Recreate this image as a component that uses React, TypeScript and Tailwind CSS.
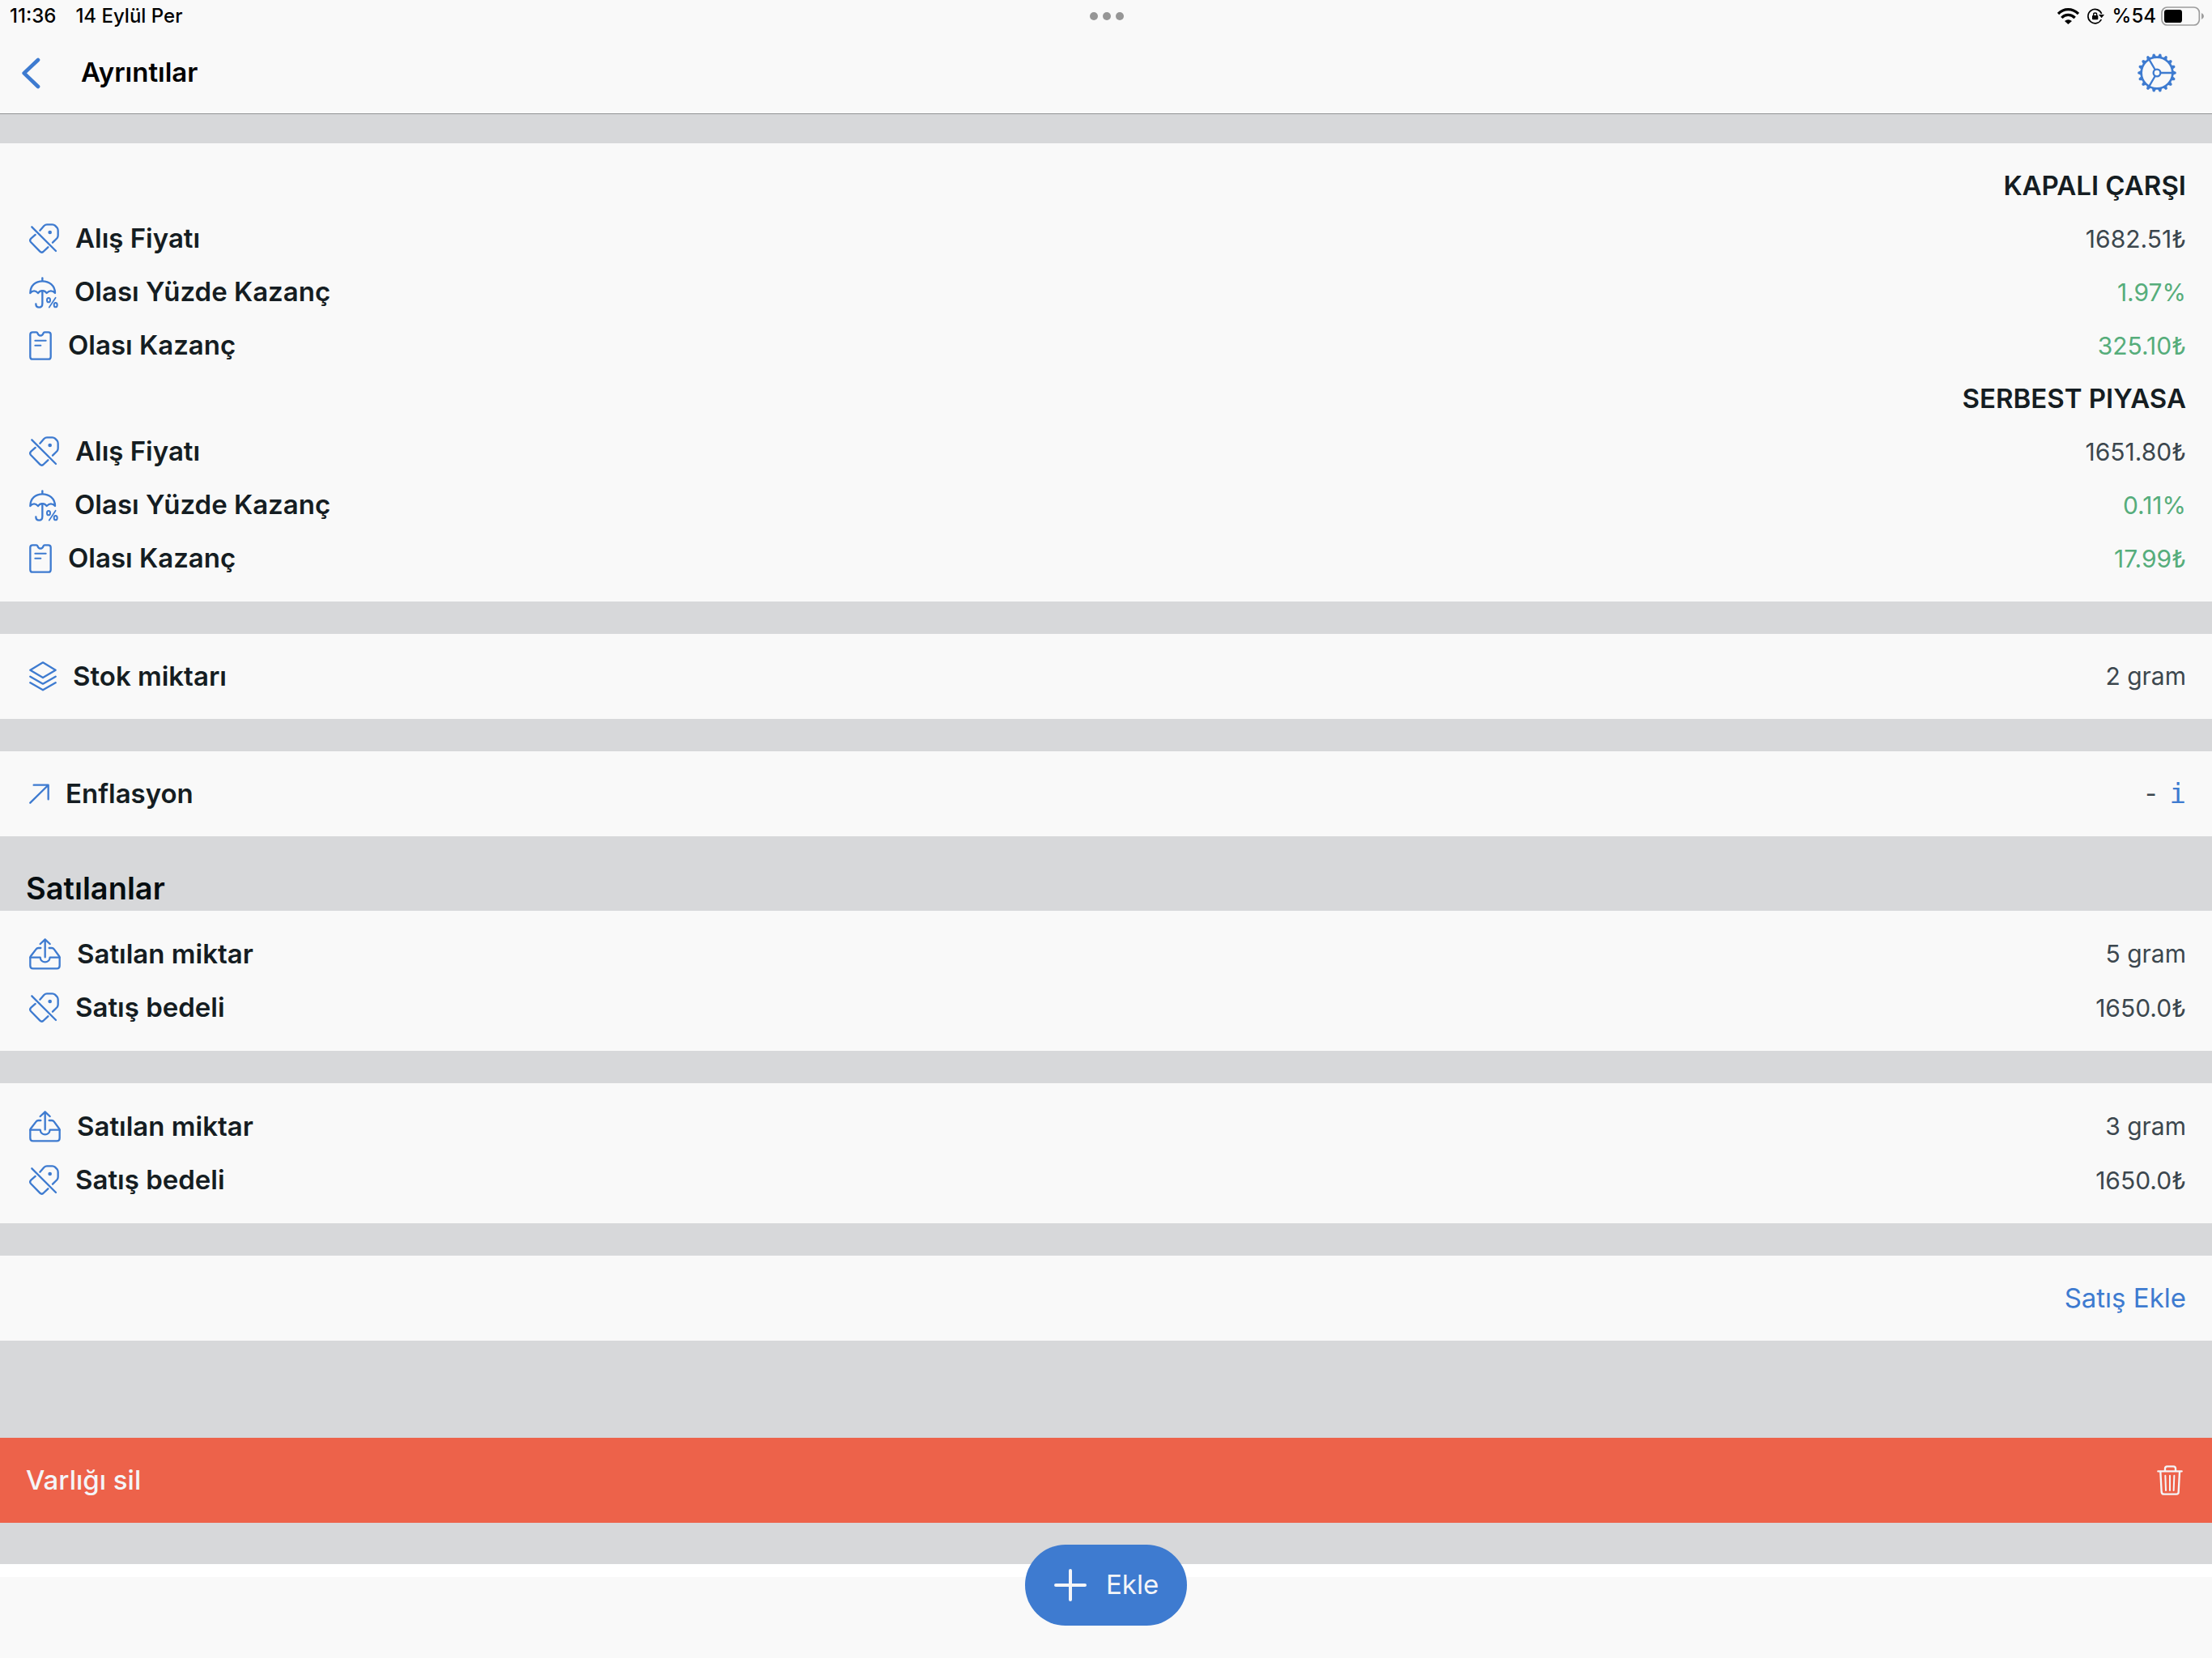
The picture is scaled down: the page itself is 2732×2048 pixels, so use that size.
import React from "react";

type Tone = "normal" | "gain";

type IconProps = {
    width: string;
    viewBox: string;
    children: React.ReactNode;
};

// Outline icon, drawn on a grid of 3 units per pixel
function LineIcon({ width, viewBox, children }: IconProps) {
    return (
        <svg
            className={`${width} h-auto ml-1 mr-5 shrink-0 text-[#3e7bd0]`}
            viewBox={viewBox}
            fill="none"
            stroke="currentColor"
            strokeWidth="7"
            strokeLinecap="round"
            strokeLinejoin="round"
            aria-hidden="true"
        >
            {children}
        </svg>
    );
}

function TagSlashIcon() {
    return (
        <LineIcon width="w-[37px]" viewBox="0 0 111 112">
            <path d="M10 13 99 102" />
            <path d="M40 26 55 9Q60 4 66 4H86Q92 4 96 8L104 16Q107 20 107 27V44Q107 49 104 54L87 71" />
            <path d="M23 42 6 57Q1 63 6 69L40 104Q46 110 52 105L70 88" />
            <circle cx="77" cy="33" r="7" fill="currentColor" stroke="none" />
        </LineIcon>
    );
}

function UmbrellaIcon() {
    return (
        <LineIcon width="w-[36px]" viewBox="0 0 108 117">
            <path d="M49 4V14" />
            <path d="M4 60C4 32 24 16 49 16S96 32 96 60Q81 44 65 60Q57 50 49 52Q41 50 33 60Q18 44 4 60Z" />
            <path d="M49 52V99Q49 113 37 113Q25 113 25 100" />
            <ellipse cx="72" cy="86" rx="6" ry="8" strokeWidth="6" />
            <ellipse cx="98" cy="104" rx="6" ry="8" strokeWidth="6" />
            <path d="M98 77 74 113" strokeWidth="5" />
        </LineIcon>
    );
}

function NoteIcon() {
    return (
        <LineIcon width="w-[28px]" viewBox="0 0 84 108">
            <path d="M27 4H13Q4 4 4 13V95Q4 104 13 104H71Q80 104 80 95V13Q80 4 71 4H57Q54 4 53 7C50 20 34 20 31 7Q30 4 27 4Z" />
            <path d="M22 35H62M22 53H43" strokeWidth="6" />
        </LineIcon>
    );
}

function LayersIcon() {
    return (
        <LineIcon width="w-[34px]" viewBox="0 0 102 110">
            <path d="M51 4 98 32 51 60 4 32Z" />
            <path d="M4 56 51 83 98 56" />
            <path d="M4 79 51 106 98 79" />
        </LineIcon>
    );
}

function ArrowIcon() {
    return (
        <LineIcon width="w-[25px]" viewBox="0 0 75 75">
            <path d="M4 71 70 6M17 5H71V58" />
        </LineIcon>
    );
}

function TrayIcon() {
    return (
        <LineIcon width="w-[39px]" viewBox="0 0 117 116">
            <path d="M59 4V70M41 21 59 4 77 21" />
            <path d="M43 36H34Q29 36 26 40L6 66Q4 69 4 73V101Q4 112 14 112H103Q113 112 113 101V73Q113 69 111 66L92 40Q89 36 84 36H74" />
            <path d="M4 71H41C43 94 75 94 77 71H113" />
        </LineIcon>
    );
}

function TrashIcon() {
    return (
        <svg
            className="w-8 h-auto mr-1 text-[#f4f5f8]"
            viewBox="0 0 96 111"
            fill="none"
            stroke="currentColor"
            strokeWidth="7"
            strokeLinecap="round"
            strokeLinejoin="round"
            aria-hidden="true"
        >
            <path d="M30 20V12Q30 4 38 4H61Q69 4 69 12V20M4 22H92" />
            <path d="M13 24 17 99Q18 107 26 107H72Q80 107 80 99L84 24" />
            <path d="M31 38 33 93M48 38V93M64 38 62 93" strokeWidth="6" />
        </svg>
    );
}

function GearIcon() {
    const teeth = Array.from({ length: 18 }, (_, i) => i * 20);

    return (
        <svg className="size-12" viewBox="-72 -72 144 144" fill="none" stroke="currentColor" aria-hidden="true">
            <circle r="58" strokeWidth="8" />
            <circle r="13" strokeWidth="7" />
            <path d="M14 0H58M-7 12-29 50M-7-12-29-50" strokeWidth="7" />
            {teeth.map((angle) => (
                <path
                    key={angle}
                    d="M59-8 70-4Q73 0 70 4L59 8Z"
                    fill="currentColor"
                    stroke="none"
                    transform={`rotate(${angle})`}
                />
            ))}
        </svg>
    );
}

function WifiIcon() {
    return (
        <svg className="w-[27px] h-5" viewBox="0 0 81 60" fill="none" stroke="#000" strokeWidth="10" aria-hidden="true">
            <path d="M3 21Q19 5 40 5T78 21" />
            <path d="M16 36Q26 25 40 25T65 36" />
            <path d="M27 48Q40 37 54 48L40 60Z" fill="#000" stroke="none" />
        </svg>
    );
}

function RotationLockIcon() {
    return (
        <svg className="w-[21px] h-5" viewBox="0 0 63 60" fill="none" stroke="#000" strokeWidth="5" aria-hidden="true">
            <path d="M53 21A26 26 0 1 0 52 42" />
            <path d="M42 24H63L53 37Z" fill="#000" stroke="none" />
            <rect x="18" y="27" width="22" height="16" rx="3" fill="#000" stroke="none" />
            <path d="M23 29V23Q23 18 29 18T35 23V29" strokeWidth="4" />
        </svg>
    );
}

function BatteryIcon() {
    return (
        <svg className="w-[53px] h-6" viewBox="0 0 159 72" fill="none" aria-hidden="true">
            <rect x="3" y="3" width="139" height="66" rx="20" stroke="#9d9d9d" strokeWidth="5" />
            <rect x="12" y="12" width="66" height="48" rx="10" fill="#000" />
            <path d="M150 24Q159 28 159 36T150 48Z" fill="#9d9d9d" />
        </svg>
    );
}

function StatusBar() {
    return (
        <div className="grid grid-cols-3 items-center h-10 pl-3 pr-[10px] text-[24px] font-medium text-black">
            <div className="flex gap-6">
                <span>11:36</span>
                <span>14 Eylül Per</span>
            </div>
            <div className="flex justify-center gap-[6px]">
                <span className="size-[10px] rounded-full bg-[#969696]" />
                <span className="size-[10px] rounded-full bg-[#969696]" />
                <span className="size-[10px] rounded-full bg-[#969696]" />
            </div>
            <div className="flex items-center justify-end">
                <WifiIcon />
                <span className="ml-[10px] mr-[10px]">
                    <RotationLockIcon />
                </span>
                <span className="mr-[6px]">%54</span>
                <BatteryIcon />
            </div>
        </div>
    );
}

function Panel({ children }: { children: React.ReactNode }) {
    return <section className="bg-[#f9f9f9] px-8 py-5">{children}</section>;
}

function MarketName({ children }: { children: React.ReactNode }) {
    return <h2 className="flex h-[65px] items-center justify-end text-[33px] font-semibold">{children}</h2>;
}

type RowProps = {
    icon: React.ReactNode;
    label: string;
    value: React.ReactNode;
    tone?: Tone;
    height?: string;
};

function Row({ icon, label, value, tone = "normal", height = "h-[66px]" }: RowProps) {
    return (
        <div className={`flex items-center ${height}`}>
            {icon}
            <span className="text-[33px] font-semibold">{label}</span>
            <span className={`ml-auto text-[30px] ${tone === "gain" ? "text-[#56ad7b]" : "text-[#3c474e]"}`}>
                {value}
            </span>
        </div>
    );
}

const markets = [
    { name: "KAPALI ÇARŞI", price: "1682.51₺", percent: "1.97%", profit: "325.10₺" },
    { name: "SERBEST PIYASA", price: "1651.80₺", percent: "0.11%", profit: "17.99₺" },
];

const sales = [
    { amount: "5 gram", price: "1650.0₺" },
    { amount: "3 gram", price: "1650.0₺" },
];

function App() {
    return (
        <div className="flex min-h-screen flex-col bg-[#d7d8da] font-['Inter','Liberation_Sans',sans-serif] text-[#151d22]">
            {/* Header */}
            <header className="border-b border-[#929395] bg-[#f9f9f9]">
                <StatusBar />
                <div className="flex h-[100px] items-center pl-[27px] pr-11">
                    <button className="text-[#3e7bd0]" aria-label="Geri">
                        <svg
                            className="w-[23px] h-[39px]"
                            viewBox="0 0 69 117"
                            fill="none"
                            stroke="currentColor"
                            strokeWidth="14"
                            strokeLinecap="round"
                            strokeLinejoin="round"
                        >
                            <path d="M60 9 8 58 60 108" />
                        </svg>
                    </button>
                    <h1 className="ml-[50px] text-[33px] font-semibold text-black">Ayrıntılar</h1>
                    <button className="ml-auto text-[#3e7bd0]" aria-label="Ayarlar">
                        <GearIcon />
                    </button>
                </div>
            </header>

            {/* Details */}
            <main className="flex flex-col gap-10 pt-9">
                <Panel>
                    {markets.map((market) => (
                        <React.Fragment key={market.name}>
                            <MarketName>{market.name}</MarketName>
                            <Row icon={<TagSlashIcon />} label="Alış Fiyatı" value={market.price} />
                            <Row icon={<UmbrellaIcon />} label="Olası Yüzde Kazanç" value={market.percent} tone="gain" />
                            <Row icon={<NoteIcon />} label="Olası Kazanç" value={market.profit} tone="gain" />
                        </React.Fragment>
                    ))}
                </Panel>

                <Panel>
                    <Row icon={<LayersIcon />} label="Stok miktarı" value="2 gram" height="h-[65px]" />
                </Panel>

                <div>
                    <Panel>
                        <Row
                            icon={<ArrowIcon />}
                            label="Enflasyon"
                            height="h-[65px]"
                            value={
                                <span className="flex items-center gap-4">
                                    -
                                    <button
                                        className="font-['DejaVu_Sans_Mono',monospace] text-[34px] text-[#3e7bd0]"
                                        aria-label="Bilgi"
                                    >
                                        i
                                    </button>
                                </span>
                            }
                        />
                    </Panel>

                    {/* Sold items */}
                    <h2 className="px-8 pt-9 text-[38px] leading-[56px] font-semibold text-[#060d10]">Satılanlar</h2>
                    <div className="flex flex-col gap-10">
                        {sales.map((sale, i) => (
                            <Panel key={i}>
                                <Row
                                    icon={<TrayIcon />}
                                    label="Satılan miktar"
                                    value={sale.amount}
                                    height="h-[67px]"
                                />
                                <Row icon={<TagSlashIcon />} label="Satış bedeli" value={sale.price} />
                            </Panel>
                        ))}
                    </div>
                </div>

                <Panel>
                    <div className="flex h-[65px] items-center justify-end">
                        <button className="text-[33px] text-[#3e7bd0]">Satış Ekle</button>
                    </div>
                </Panel>
            </main>

            {/* Delete */}
            <button className="mt-[120px] flex h-[105px] w-full items-center justify-between bg-[#ed624a] px-8 text-[33px] font-medium text-[#f4f5f8]">
                Varlığı sil
                <TrashIcon />
            </button>

            {/* Footer with the floating add button */}
            <footer className="relative mt-auto h-[116px] border-t-16 border-white bg-[#f9f9f9]">
                <button className="absolute bottom-10 left-1/2 flex h-[100px] w-[200px] -translate-x-1/2 items-center rounded-full bg-[#3e7bd0] pl-9 text-[33px] text-[#f4f5f8]">
                    <svg
                        className="mr-6 size-10"
                        viewBox="0 0 40 40"
                        stroke="currentColor"
                        strokeWidth="4"
                        strokeLinecap="round"
                        aria-hidden="true"
                    >
                        <path d="M20 2V38M2 20H38" />
                    </svg>
                    Ekle
                </button>
            </footer>
        </div>
    );
}

export default App;
